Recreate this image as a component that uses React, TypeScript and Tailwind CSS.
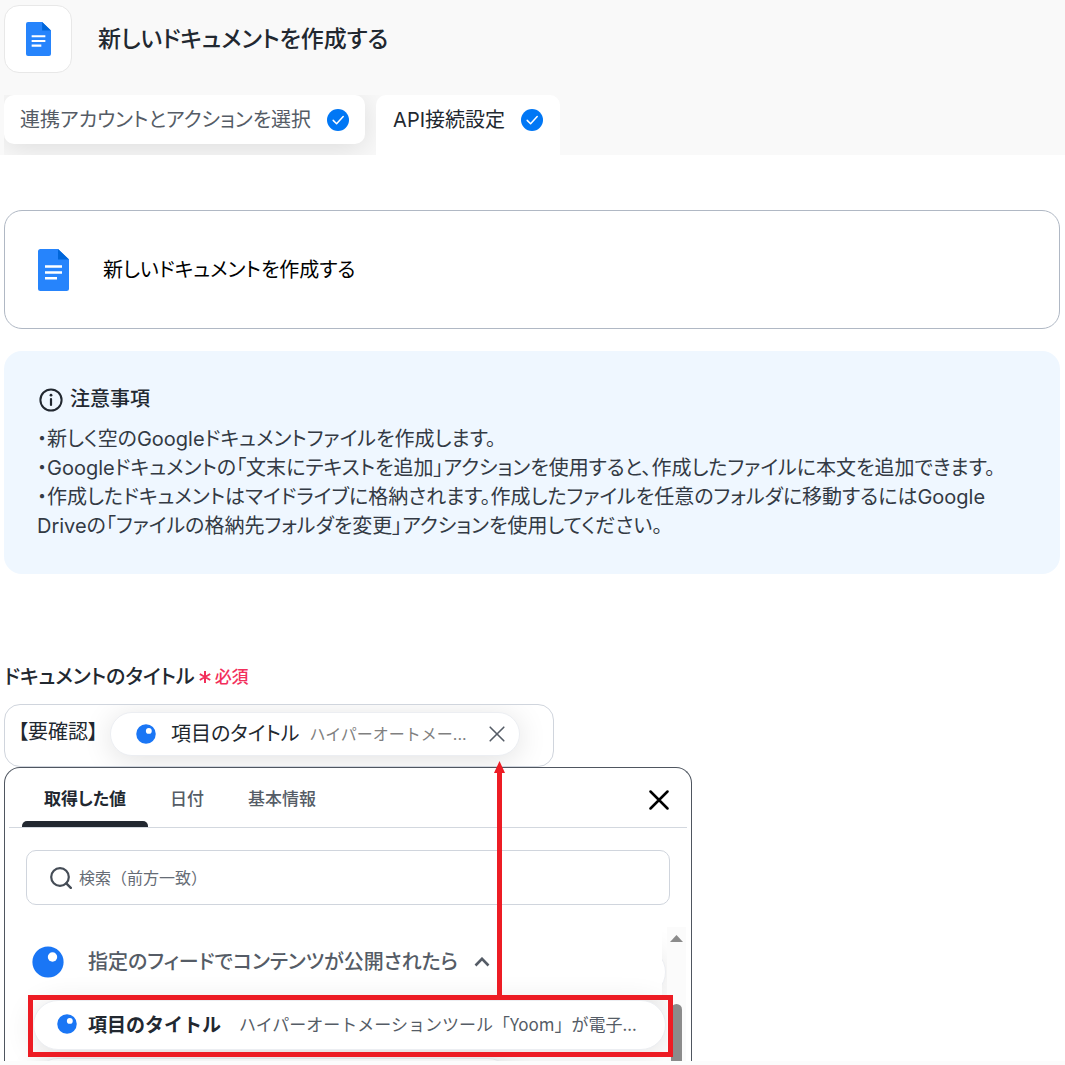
import { clsx } from 'clsx';

const tabs = [
  { id: 'action', label: '連携アカウントとアクションを選択', active: false },
  { id: 'api', label: 'API接続設定', active: true },
];

const notes = [
  '・新しく空のGoogleドキュメントファイルを作成します。',
  '・Googleドキュメントの「文末にテキストを追加」アクションを使用すると、作成したファイルに本文を追加できます。',
  '・作成したドキュメントはマイドライブに格納されます。作成したファイルを任意のフォルダに移動するにはGoogle Driveの「ファイルの格納先フォルダを変更」アクションを使用してください。',
];

const valueTabs = [
  { id: 'values', label: '取得した値', active: true },
  { id: 'date', label: '日付', active: false },
  { id: 'basic', label: '基本情報', active: false },
];

const DocsIcon = ({ className }: { className?: string }) => (
  <svg viewBox="0 0 31 42" className={className} aria-hidden="true">
    <path d="M2.5 0H20L31 10.5V39.5A2.5 2.5 0 0 1 28.5 42H2.5A2.5 2.5 0 0 1 0 39.5V2.5A2.5 2.5 0 0 1 2.5 0Z" fill="#2684fc" />
    <path d="M20 0L31 10.5H20Z" fill="#0066da" />
    <path d="M7 17.5H24M7 23.5H24M7 29.2H19" stroke="#fff" strokeWidth="2.6" fill="none" />
  </svg>
);

const CheckBadge = () => (
  <svg viewBox="0 0 22 22" className="size-[22px] shrink-0" aria-hidden="true">
    <circle cx="11" cy="11" r="11" fill="#0077f5" />
    <path d="M6.2 11.4L9.6 14.8L16.2 7.6" fill="none" stroke="#fff" strokeWidth="1.5" strokeLinecap="round" strokeLinejoin="round" />
  </svg>
);

const FeedIcon = ({ className }: { className?: string }) => (
  <svg viewBox="0 0 32 32" className={className} aria-hidden="true">
    <circle cx="16" cy="16" r="15.6" fill="#1a76f5" />
    <circle cx="20.5" cy="11" r="4.7" fill="#fff" />
  </svg>
);

const CloseIcon = ({ className }: { className?: string }) => (
  <svg viewBox="0 0 20 20" className={className} aria-hidden="true">
    <path d="M1.5 1.5L18.5 18.5M18.5 1.5L1.5 18.5" fill="none" stroke="currentColor" strokeLinecap="round" />
  </svg>
);

const Header = () => (
  <header className="bg-[#f9f9f9] pt-[5px] pl-1">
    <div className="flex items-center gap-[26px]">
      <div className="flex size-[68px] items-center justify-center rounded-[15px] border border-[#e8e8e8] bg-white">
        <DocsIcon className="h-[34px] w-[25px]" />
      </div>
      <h1 className="text-[23px] font-medium text-[#222830]">新しいドキュメントを作成する</h1>
    </div>
    <nav className="mt-[22px] flex h-[60px] items-start gap-[11px] overflow-hidden">
      {tabs.map((tab) => (
        <button
          key={tab.id}
          type="button"
          className={clsx(
            'flex items-center gap-4 bg-white text-[20px] whitespace-nowrap',
            tab.active
              ? 'relative h-[60px] rounded-t-[10px] px-[17px] pb-[11px] text-[#222830]'
              : 'h-[49px] rounded-[10px] px-4 text-[#555c66] shadow-[0_4px_30px_rgba(0,0,0,0.12)]',
          )}
        >
          {tab.label}
          <CheckBadge />
        </button>
      ))}
    </nav>
  </header>
);

const Notice = () => (
  <section className="mt-[22px] rounded-[18px] bg-[#eff7ff] px-[33px] pt-[34px] pb-[33px] text-[#333a44]">
    <h2 className="flex items-center gap-[7px] text-[20px] leading-[29px] font-medium text-[#222830]">
      <svg viewBox="0 0 24 24" className="ml-0.5 size-6" aria-hidden="true">
        <circle cx="12" cy="12" r="10.6" fill="none" stroke="currentColor" strokeWidth="2" />
        <path d="M12 11V17" stroke="currentColor" strokeWidth="2.2" strokeLinecap="round" />
        <circle cx="12" cy="7.2" r="1.4" fill="currentColor" />
      </svg>
      注意事項
    </h2>
    <div className="mt-[11px] text-[20px] leading-[29px]">
      {notes.map((note) => (
        <p key={note}>{note}</p>
      ))}
    </div>
  </section>
);

const ValuePanel = () => (
  <div className="relative max-w-[688px] rounded-t-[16px] border border-b-0 border-[#4f5660] bg-white">
    <div className="mx-1 flex h-[60px] items-stretch border-b border-[#d3d8df] pl-[13px]">
      {valueTabs.map((tab) => (
        <button
          key={tab.id}
          type="button"
          className={clsx(
            'flex flex-col items-center text-[17px]',
            tab.active ? 'w-[126px] font-bold text-[#222830]' : 'px-[22px] font-medium text-[#555c66]',
          )}
        >
          <span className="flex flex-1 items-center pt-[10px]">{tab.label}</span>
          <span className={clsx('h-[6px] w-full rounded-t-[5px]', tab.active && 'bg-[#222830]')} />
        </button>
      ))}
      <button type="button" aria-label="閉じる" className="mt-1 mr-[18px] ml-auto text-black">
        <CloseIcon className="size-5 stroke-[2.5]" />
      </button>
    </div>

    <label className="mx-[21px] mt-[22px] flex h-[55px] items-center gap-[7px] rounded-[10px] border border-[#d0d5dd] pl-[23px] [font-feature-settings:normal]">
      <svg viewBox="0 0 22 22" className="size-[22px]" aria-hidden="true">
        <circle cx="10" cy="10" r="8.8" fill="none" stroke="#454c56" strokeWidth="2.2" />
        <path d="M16.3 16.3L20.8 20.8" stroke="#454c56" strokeWidth="2.4" strokeLinecap="round" />
      </svg>
      <input
        type="text"
        aria-label="検索"
        placeholder="検索（前方一致）"
        className="min-w-0 flex-1 bg-transparent text-[16px] outline-none placeholder:text-[#666c75]"
      />
    </label>

    <div className="mt-[22px] mr-[5px] flex h-[134px] overflow-hidden">
      <div className="relative flex-1 overflow-hidden pr-px pl-[28px]">
        {/* row scrolled under the group heading */}
        <div className="absolute top-5 right-px h-[50px] w-40 rounded-full border border-[#eceef2] bg-white shadow-[0_4px_30px_rgba(0,0,0,0.12)]" />
        <div className="relative -ml-[28px] mr-1 bg-white pl-[27px]">
          <button type="button" className="flex h-[69px] items-center text-[20px] font-medium text-[#555c66]">
            <FeedIcon className="size-8" />
            <span className="mr-4 ml-6">指定のフィードでコンテンツが公開されたら</span>
            <svg viewBox="0 0 16 10" className="h-[10px] w-4" aria-hidden="true">
              <path d="M1.5 8.5L8 1.8L14.5 8.5" fill="none" stroke="currentColor" strokeWidth="2.6" />
            </svg>
          </button>
        </div>
        <button
          type="button"
          className="relative mt-1 flex h-[50px] w-full items-center rounded-full border border-[#eceef2] bg-white pb-0.5 pl-[23px] font-['Noto_Sans_CJK_JP',sans-serif] shadow-[0_4px_30px_rgba(0,0,0,0.12)] [font-feature-settings:normal]"
        >
          <FeedIcon className="size-5" />
          <span className="ml-[11px] text-[19px] font-bold whitespace-nowrap text-[#222830]">項目のタイトル</span>
          <span className="ml-[18px] text-[17px] whitespace-nowrap text-[#555c66]">
            ハイパーオートメーションツール「Yoom」が電子...
          </span>
        </button>
        <div className="mt-[8px] h-[50px] w-[480px] rounded-full border border-[#eceef2] bg-white shadow-[0_4px_30px_rgba(0,0,0,0.12)]" />
      </div>
      <div className="flex w-[19px] flex-col items-center bg-[#fbfbfb] pt-2" aria-hidden="true">
        <svg viewBox="0 0 13 7" className="h-[7px] w-[13px]">
          <path d="M6.5 0L13 7H0Z" fill="#8b8b8b" />
        </svg>
        <div className="mt-[62px] w-[11px] flex-1 rounded-t-[6px] bg-[#8b8b8b]" />
      </div>
    </div>

    {/* callout from the selected row up to the inserted chip */}
    <div className="absolute top-[227px] right-[18px] left-[23px] h-[62px] border-[5px] border-[#ed1c24]" />
    <svg viewBox="0 0 11 235" className="absolute top-[-7px] left-[489px] h-[235px] w-[11px]" aria-hidden="true">
      <path d="M5.5 0L11 12H8V235H3V12H0Z" fill="#ed1c24" />
    </svg>
  </div>
);

const App = () => {
  return (
    <div className="min-h-screen bg-[#fcfcfc] font-['Inter','Noto_Sans_CJK_JP',sans-serif] [font-feature-settings:'palt']">
      <div className="bg-white">
        <Header />
        <main className="pr-[5px] pl-1">
          <section className="mt-[55px] flex h-[119px] items-center gap-[34px] rounded-[18px] border border-[#b0b8c4] pl-[33px]">
            <DocsIcon className="h-[42px] w-[31px]" />
            <p className="text-[20px] text-black">新しいドキュメントを作成する</p>
          </section>

          <Notice />

          <section className="mt-[88px]">
            <h3 className="flex items-center gap-1 text-[20px] leading-[30px] font-medium text-[#222830]">
              ドキュメントのタイトル
              <span className="flex items-center gap-1 text-[17px] text-[#f22f5b]">
                <svg viewBox="0 0 12 14" className="h-[14px] w-3" aria-hidden="true">
                  <path d="M6 1V13M0.8 4L11.2 10M11.2 4L0.8 10" stroke="currentColor" strokeWidth="2" />
                </svg>
                必須
              </span>
            </h3>
            <div className="mt-3 flex h-[63px] max-w-[550px] items-start gap-3 overflow-hidden rounded-[16px] border border-[#d0d5dd] pt-[7px] pl-[13px] text-[20px] text-[#222830]">
              <span className="leading-[40px] whitespace-nowrap">【要確認】</span>
              <div className="flex h-[44px] w-[410px] items-center rounded-full border border-[#eceef2] bg-white pl-[25px] shadow-[0_4px_30px_rgba(0,0,0,0.12)]">
                <FeedIcon className="size-5" />
                <span className="ml-[15px] whitespace-nowrap">項目のタイトル</span>
                <span className="ml-[10px] text-[16px] whitespace-nowrap text-[#808080] [font-feature-settings:normal]">
                  ハイパーオートメー...
                </span>
                <button type="button" aria-label="削除" className="mr-[14px] ml-auto text-[#555c66]">
                  <CloseIcon className="size-4 stroke-2" />
                </button>
              </div>
            </div>
            <ValuePanel />
          </section>
        </main>
      </div>
    </div>
  );
};

export default App;
